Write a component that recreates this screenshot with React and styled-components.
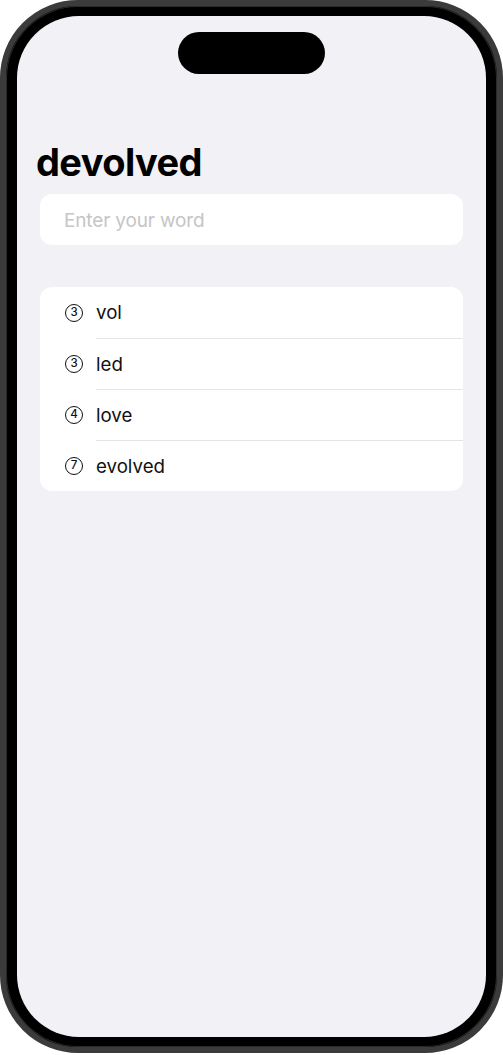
import React from "react";
import styled, { createGlobalStyle } from "styled-components";

const Global = createGlobalStyle`
  html, body { margin: 0; padding: 0; background: #ffffff; }
  body { font-family: Inter, "Noto Sans", sans-serif; -webkit-font-smoothing: antialiased; }
  * { box-sizing: border-box; }
`;

const Frame = styled.div`
  width: 503px;
  height: 1053px;
  border-radius: 78px;
  background: #000;
  border: 6px solid #3b3b3b;
  box-shadow: inset 0 0 0 1px #2a2a2a;
  padding: 10px 11px;
  display: flex;
`;

const Screen = styled.div`
  flex: 1;
  background: #f1f1f6;
  border-radius: 62px;
  overflow: hidden;
  display: flex;
  flex-direction: column;
  padding: 16px 23px 0;
`;

const Island = styled.div`
  align-self: center;
  width: 147px;
  height: 42px;
  border-radius: 21px;
  background: #000;
  flex: none;
`;

const Title = styled.h1`
  margin: 65px 0 0 -4px;
  font-size: 38px;
  line-height: 46px;
  font-weight: 700;
  color: #000;
  letter-spacing: -0.6px;
`;

const Field = styled.div`
  margin-top: 9px;
  height: 51px;
  border-radius: 12px;
  background: #fff;
  display: flex;
  align-items: center;
  padding: 1px 24px 0;
  font-size: 19px;
  letter-spacing: -0.15px;
  color: #c5c5c8;
`;

const Card = styled.div`
  margin-top: 42px;
  background: #fff;
  border-radius: 12px;
  display: flex;
  flex-direction: column;
  padding-left: 25px;
`;

const Row = styled.div`
  height: 51px;
  display: flex;
  align-items: center;
  border-top: ${(p) => (p.$first ? "none" : "1px solid #e4e4e8")};
  margin-left: ${(p) => (p.$first ? "0" : "31px")};
`;

const RowInner = styled.div`
  display: flex;
  align-items: center;
  gap: 13px;
  margin-left: ${(p) => (p.$shift ? "-31px" : "0")};
`;

const Badge = styled.span`
  width: 18px;
  height: 18px;
  border-radius: 50%;
  border: 1.5px solid #111;
  display: flex;
  align-items: center;
  justify-content: center;
  font-size: 11.5px;
  font-weight: 500;
  line-height: 1;
  color: #111;
  flex: none;
`;

const Word = styled.span`
  font-size: 18.7px;
  color: #111;
`;

const words = [
  { n: 3, w: "vol" },
  { n: 3, w: "led" },
  { n: 4, w: "love" },
  { n: 7, w: "evolved" },
];

export default function App() {
  return (
    <>
      <Global />
      <Frame>
        <Screen>
          <Island />
          <Title>devolved</Title>
          <Field>Enter your word</Field>
          <Card>
            {words.map((item, i) => (
              <Row key={i} $first={i === 0}>
                <RowInner $shift={i !== 0}>
                  <Badge>{item.n}</Badge>
                  <Word>{item.w}</Word>
                </RowInner>
              </Row>
            ))}
          </Card>
        </Screen>
      </Frame>
    </>
  );
}
